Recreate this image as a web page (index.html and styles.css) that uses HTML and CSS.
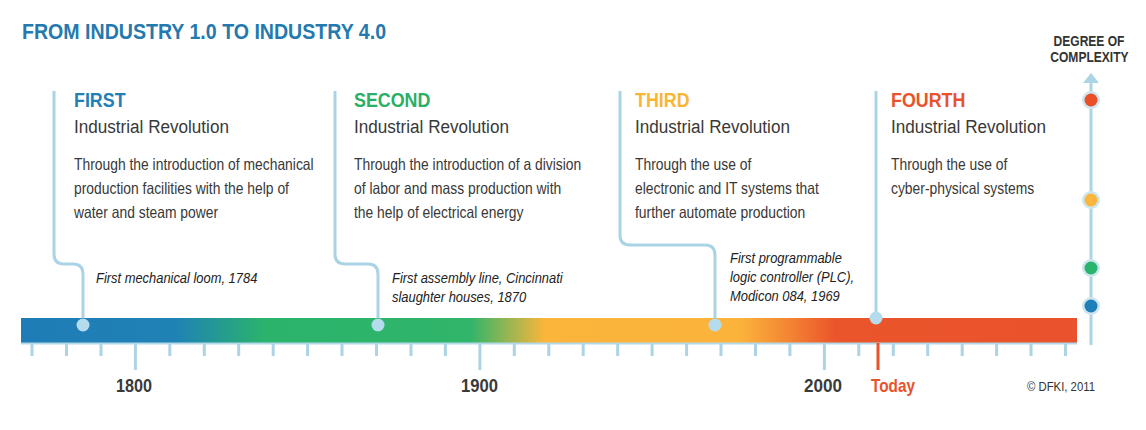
FILE: index.html
```html
<!DOCTYPE html>
<html lang="en">
<head>
<meta charset="utf-8">
<title>From Industry 1.0 to Industry 4.0</title>
<link rel="stylesheet" href="styles.css">
</head>
<body>
<div class="page">
  <svg class="diagram" width="1146" height="430" viewBox="0 0 1146 430" xmlns="http://www.w3.org/2000/svg">
    <defs>
      <linearGradient id="bargrad" gradientUnits="userSpaceOnUse" x1="21" y1="0" x2="1077" y2="0">
        <stop offset="0" stop-color="#1f7cb6"/>
        <stop offset="0.146" stop-color="#1f82b5"/>
        <stop offset="0.231" stop-color="#2bb36c"/>
        <stop offset="0.425" stop-color="#30b56a"/>
        <stop offset="0.496" stop-color="#fbb53b"/>
        <stop offset="0.681" stop-color="#fbb33b"/>
        <stop offset="0.728" stop-color="#f38433"/>
        <stop offset="0.771" stop-color="#eb552b"/>
        <stop offset="1" stop-color="#e9522c"/>
      </linearGradient>
    </defs>
    <g class="connector">
      <path d="M54 91 V254 Q54 264 64 264 H73 Q83 264 83 274 V325"/>
      <path d="M335 91 V254 Q335 264 345 264 H368 Q378 264 378 274 V325"/>
      <path d="M620 91 V235 Q620 245 630 245 H705 Q715 245 715 255 V325"/>
      <path d="M876 91 V318"/>
    </g>
    <rect x="21" y="318" width="1056" height="25" fill="url(#bargrad)"/>
    <rect x="21" y="342.5" width="1056" height="2" class="underline"/>
    <g class="ticks">
      <path d="M32 344V356M66.5 344V356M101 344V356M135.4 344V370M169.8 344V356M204.3 344V356M238.7 344V356M273.2 344V356M307.6 344V356M342 344V356M376.5 344V356M411 344V356M445.4 344V356M479.9 344V370M514.3 344V356M548.8 344V356M583.2 344V356M617.7 344V356M652.1 344V356M686.6 344V356M721 344V356M755.5 344V356M789.9 344V356M824.4 344V370M858.8 344V356M893.3 344V356M927.7 344V356M962.2 344V356M996.6 344V356M1031 344V356M1065.5 344V356"/>
    </g>
    <path class="today-tick" d="M878 343V370"/>
    <g class="bar-dot">
      <circle cx="83" cy="325" r="6.5"/>
      <circle cx="378" cy="325" r="6.5"/>
      <circle cx="715" cy="325" r="6.5"/>
      <circle cx="876" cy="318" r="6.5"/>
    </g>
    <path class="axis" d="M1091 80V345"/>
    <polygon class="axis-head" points="1083,83 1091,73 1099,83"/>
    <g class="halo">
      <circle cx="1091" cy="100" r="9"/>
      <circle cx="1091" cy="200" r="9"/>
      <circle cx="1091" cy="268" r="9"/>
      <circle cx="1091" cy="306" r="9"/>
    </g>
    <circle cx="1091" cy="100" r="6.5" class="c-red"/>
    <circle cx="1091" cy="200" r="6.5" class="c-yellow"/>
    <circle cx="1091" cy="268" r="6.5" class="c-green"/>
    <circle cx="1091" cy="306" r="6.5" class="c-blue"/>
    <text x="116" y="392" class="year" textLength="36" lengthAdjust="spacingAndGlyphs">1800</text>
    <text x="461" y="392" class="year" textLength="37" lengthAdjust="spacingAndGlyphs">1900</text>
    <text x="804" y="392" class="year" textLength="38" lengthAdjust="spacingAndGlyphs">2000</text>
    <text x="871" y="392" class="today" textLength="44" lengthAdjust="spacingAndGlyphs">Today</text>
    <text x="1027" y="391" class="credit" textLength="68" lengthAdjust="spacingAndGlyphs">© DFKI, 2011</text>
  </svg>

  <div class="content">
    <header class="header">
      <h1 class="title">FROM INDUSTRY 1.0 TO INDUSTRY 4.0</h1>
      <div class="complexity">DEGREE OF<br>COMPLEXITY</div>
    </header>

    <section class="eras">
      <div class="era">
        <h2 class="era-name first">FIRST</h2>
        <div class="era-sub">Industrial Revolution</div>
        <p class="era-text">Through the introduction of mechanical<br>production facilities with the help of<br>water and steam power</p>
      </div>
      <div class="era">
        <h2 class="era-name second">SECOND</h2>
        <div class="era-sub">Industrial Revolution</div>
        <p class="era-text">Through the introduction of a division<br>of labor and mass production with<br>the help of electrical energy</p>
      </div>
      <div class="era">
        <h2 class="era-name third">THIRD</h2>
        <div class="era-sub">Industrial Revolution</div>
        <p class="era-text">Through the use of<br>electronic and IT systems that<br>further automate production</p>
      </div>
      <div class="era">
        <h2 class="era-name fourth">FOURTH</h2>
        <div class="era-sub">Industrial Revolution</div>
        <p class="era-text">Through the use of<br>cyber-physical systems</p>
      </div>
    </section>

    <section class="notes">
      <p class="note">First mechanical loom, 1784</p>
      <p class="note">First assembly line, Cincinnati<br>slaughter houses, 1870</p>
      <p class="note note-high">First programmable<br>logic controller (PLC),<br>Modicon 084, 1969</p>
    </section>
  </div>
</div>
</body>
</html>
```

FILE: styles.css
```css
html, body {
  margin: 0;
  padding: 0;
  background: #ffffff;
}

body {
  font-family: "Liberation Sans", Arial, sans-serif;
  color: #383838;
}

.page {
  position: relative;
  width: 1146px;
  height: 430px;
  overflow: hidden;
  background: #ffffff;
}

.diagram {
  position: absolute;
  left: 0;
  top: 0;
  z-index: 0;
}

.content {
  position: relative;
  z-index: 1;
}

/* condensed look: the reference uses a condensed grotesque */
.title,
.era-name,
.era-sub,
.era-text,
.note {
  white-space: nowrap;
  transform-origin: 0 50%;
}

.header {
  display: flex;
  justify-content: space-between;
  align-items: flex-start;
  padding: 20px 12px 0 22px;
}

.title {
  margin: 0;
  font-size: 22.5px;
  line-height: 24px;
  font-weight: 700;
  color: #2479ae;
  transform: scaleX(0.87);
}

.complexity {
  margin-top: 13px;
  width: 90px;
  text-align: center;
  white-space: nowrap;
  font-size: 14px;
  line-height: 16px;
  font-weight: 700;
  color: #333333;
  transform: scaleX(0.86);
  transform-origin: 50% 50%;
}

.eras {
  display: grid;
  grid-template-columns: 280px 281px 256px 1fr;
  padding-left: 74px;
  margin-top: 23px;
}

.era-name {
  margin: 0;
  font-size: 21px;
  line-height: 24px;
  font-weight: 700;
  transform: scaleX(0.85);
}

.first { color: #2280b6; }
.second { color: #2aaf66; }
.third { color: #f9b535; }
.fourth { color: #e8532b; }

.era-sub {
  margin-top: 3px;
  font-size: 18px;
  line-height: 24px;
  color: #383838;
  transform: scaleX(0.95);
}

.era-text {
  margin: 12.5px 0 0;
  font-size: 16.5px;
  line-height: 24px;
  color: #383838;
  transform: scaleX(0.84);
}

.notes {
  display: grid;
  grid-template-columns: 296px 338px 1fr;
  align-items: start;
  padding-left: 96px;
  margin-top: 44px;
}

.note {
  margin: 0;
  font-size: 15px;
  line-height: 19px;
  font-style: italic;
  color: #222222;
  transform: scaleX(0.86);
}

.note-high {
  margin-top: -20px;
}

/* diagram parts */
.connector path {
  fill: none;
  stroke: #aad4e6;
  stroke-width: 3;
}

.underline {
  fill: #b3d9e9;
}

.ticks path {
  fill: none;
  stroke: #acd4e5;
  stroke-width: 3;
}

.today-tick {
  stroke: #e9522b;
  stroke-width: 3;
  fill: none;
}

.bar-dot circle {
  fill: #b5dcec;
}

.axis {
  stroke: #acd4e5;
  stroke-width: 3;
  fill: none;
}

.axis-head {
  fill: #acd4e5;
}

.halo circle {
  fill: #cde5ee;
}

.c-red { fill: #e9502a; }
.c-yellow { fill: #fbb63d; }
.c-green { fill: #2ab46c; }
.c-blue { fill: #1f7fb8; }

.year {
  font-family: "Liberation Sans", Arial, sans-serif;
  font-size: 18.5px;
  font-weight: 700;
  fill: #3a3a3a;
}

.today {
  font-family: "Liberation Sans", Arial, sans-serif;
  font-size: 18.5px;
  font-weight: 700;
  fill: #e9522b;
}

.credit {
  font-family: "Liberation Sans", Arial, sans-serif;
  font-size: 13px;
  fill: #333333;
}
```
